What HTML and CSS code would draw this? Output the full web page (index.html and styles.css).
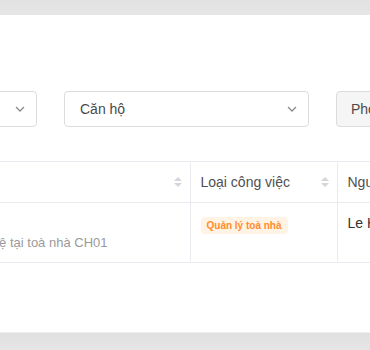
FILE: index.html
```html
<!DOCTYPE html>
<html lang="vi">
<head>
<meta charset="utf-8">
<link rel="stylesheet" href="styles.css">
</head>
<body>
<div class="top-band"></div>
<main class="card">
  <div class="filters">
    <div class="select select-1">
      <span class="select-text">Toà nhà CH01</span>
      <svg class="chev" width="10" height="6" viewBox="0 0 10 6"><path d="M1 1l4 4 4-4" fill="none" stroke="#8a8a8a" stroke-width="1.3"/></svg>
    </div>
    <div class="select select-2">
      <span class="select-text">Căn hộ</span>
      <svg class="chev" width="10" height="6" viewBox="0 0 10 6"><path d="M1 1l4 4 4-4" fill="none" stroke="#8a8a8a" stroke-width="1.3"/></svg>
    </div>
    <div class="btn">Phòng ban</div>
  </div>
  <table class="tbl">
    <colgroup><col class="c1"><col class="c2"><col class="c3"></colgroup>
    <thead>
      <tr>
        <th><div class="th-in"><span>Nội dung</span><span class="sort"><i class="up"></i><i class="dn"></i></span></div></th>
        <th><div class="th-in"><span>Loại công việc</span><span class="sort"><i class="up"></i><i class="dn"></i></span></div></th>
        <th><div class="th-in"><span>Người thực hiện</span></div></th>
      </tr>
    </thead>
    <tbody>
      <tr>
        <td><div class="title">Kiểm tra PCCC</div><div class="desc">Kiểm tra theo điều lệ tại toà nhà CH01</div></td>
        <td><span class="tag">Quản lý toà nhà</span></td>
        <td><div class="person">Le Hoang</div></td>
      </tr>
    </tbody>
  </table>
</main>
<div class="bottom-band"></div>
</body>
</html>
```
FILE: styles.css
```css
html, body { margin: 0; padding: 0; }
body {
  width: 370px;
  height: 350px;
  overflow: hidden;
  background: #e3e3e3;
  font-family: "Liberation Sans", Arial, sans-serif;
}
.top-band { height: 15px; background: linear-gradient(#e2e2e2, #e6e6e6); }
.card {
  height: 318px;
  background: #fff;
  border-bottom: 1px solid #efefef;
  box-sizing: border-box;
  padding-top: 76px;
  overflow: hidden;
}
.bottom-band { height: 17px; background: linear-gradient(#e0e0e0, #e6e6e6); }

.filters {
  display: flex;
  gap: 27px;
  margin-left: -100px;
  width: 600px;
}
.select {
  height: 36px;
  box-sizing: border-box;
  border: 1px solid #dcdcdf;
  border-radius: 4px;
  background: #fff;
  display: flex;
  align-items: center;
  justify-content: space-between;
  padding: 0 11px 0 15px;
  flex: none;
}
.select-1 { width: 137px; }
.select-2 { width: 245px; }
.select-text { font-size: 14px; color: #4a4a4a; }
.select-1 .select-text { visibility: hidden; }
.chev { display: block; }
.btn {
  height: 36px;
  box-sizing: border-box;
  border: 1px solid #dcdcdf;
  border-radius: 4px;
  background: #f5f5f5;
  padding: 0 14px;
  display: flex;
  align-items: center;
  font-size: 14px;
  color: #4a4a4a;
  flex: none;
}

.tbl {
  margin-top: 34px;
  margin-left: -150px;
  border-collapse: collapse;
  table-layout: fixed;
  width: 630px;
}
.c1 { width: 340px; }
.c2 { width: 147px; }
.c3 { width: 143px; }
.tbl th, .tbl td {
  border-top: 1px solid #ebeaf0;
  border-bottom: 1px solid #ebeaf0;
  border-right: 1px solid #ebeaf0;
  text-align: left;
  vertical-align: top;
  padding: 0;
}
.tbl th {
  height: 40px;
  vertical-align: middle;
  font-weight: normal;
  font-size: 14px;
  color: #4f4f4f;
}
.th-in {
  display: flex;
  align-items: center;
  justify-content: space-between;
  padding: 0 8px 0 10px;
}
.sort { display: flex; flex-direction: column; gap: 2px; }
.sort i { display: block; width: 0; height: 0; border-left: 4px solid transparent; border-right: 4px solid transparent; }
.sort .up { border-bottom: 4px solid #d6d6da; }
.sort .dn { border-top: 4px solid #d6d6da; }
.tbl td { height: 60px; padding: 12px 10px 0 10px; box-sizing: border-box; }
.title { font-size: 14px; line-height: 16px; color: #333; visibility: hidden; }
.desc { font-size: 13px; line-height: 16px; color: #9a9a9a; margin-top: 4px; text-align: right; padding-right: 72px; white-space: nowrap; }
.tag {
  display: inline-block;
  margin-top: -2px;
  background: #fff3e6;
  color: #ff8c2e;
  font-size: 10px;
  font-weight: bold;
  padding: 3px 6px;
  border-radius: 4px;
  line-height: 11px;
}
.person { font-size: 14px; line-height: 16px; color: #333; }
```
